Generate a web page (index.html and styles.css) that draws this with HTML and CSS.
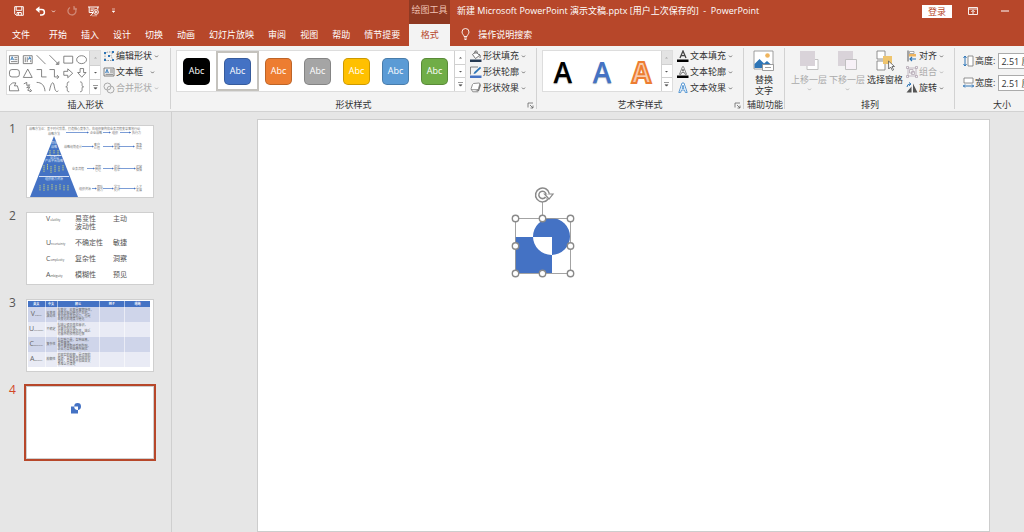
FILE: index.html
```html
<!DOCTYPE html>
<html lang="zh-CN">
<head>
<meta charset="utf-8">
<title>新建 Microsoft PowerPoint 演示文稿.pptx - PowerPoint</title>
<link rel="stylesheet" href="styles.css">
</head>
<body>
<svg class="defs" aria-hidden="true">
  <symbol id="chev" viewBox="0 0 5 5"><path d="M1 1.6 2.5 3.1 4 1.6" fill="none" stroke="currentColor" stroke-width=".8"/></symbol>
  <symbol id="launch" viewBox="0 0 7 7"><path d="M1 5.5V1h5M3 3l3 3M6 3.5V6H3.5" fill="none" stroke="#666" stroke-width=".8"/></symbol>
  <symbol id="up" viewBox="0 0 5 5"><path d="M1 3.5 2.5 2 4 3.5z" fill="currentColor"/></symbol>
  <symbol id="down" viewBox="0 0 5 5"><path d="M1 2 2.5 3.5 4 2z" fill="currentColor"/></symbol>
  <symbol id="more" viewBox="0 0 7 7"><path d="M1 1.5h5M2 3.7h3L3.5 5.2z" fill="#555" stroke="#555" stroke-width=".6"/></symbol>
</svg>

<header class="titlebar">
  <div class="quick">
    <button aria-label="保存"><svg width="10" height="10" viewBox="0 0 10 10"><path d="M.7.7h8.6v8.6H2.2L.7 7.800zM2.200.7v3.6h5.600V.7M3 9.300V6.500h4.300v2.800M4.600 7v2" fill="none" stroke="#fff" stroke-width="1"/></svg></button>
    <button class="undo" aria-label="撤消"><svg width="11" height="10" viewBox="0 0 11 10"><path d="M1.500 3.500h5.200a2.700 2.700 0 0 1 0 5.400H5" fill="none" stroke="#fff" stroke-width="1.500"/><path d="M4.500.2.6 3.500l3.900 3.400z" fill="#fff"/></svg><svg width="5" height="5"><use href="#chev"/></svg></button>
    <button class="faded" aria-label="恢复"><svg width="10" height="10" viewBox="0 0 10 10"><path d="M7.400 1.800A4 4 0 1 1 3 1.500M7 0v3h3" fill="none" stroke="#fff" stroke-width="1.300"/></svg></button>
    <button aria-label="从头开始"><svg width="12" height="11" viewBox="0 0 12 11"><path d="M0 1h11M1.200 1v5.500h4M9.800 1v2.500M2.500 3h4M2.500 4.700h2.500M2.500 10 5 6.800" fill="none" stroke="#fff" stroke-width="1"/><circle cx="8" cy="6" r="2.400" fill="none" stroke="#fff" stroke-width=".9"/><path d="m7.300 4.800 2 1.200-2 1.200zM4 9.800h5" fill="#fff" stroke="#fff" stroke-width=".5"/></svg></button>
    <button aria-label="自定义快速访问工具栏"><svg width="5" height="6" viewBox="0 0 5 6"><path d="M1 1h3M1.200 3h2.600L2.500 4.500z" fill="#fff" stroke="#fff" stroke-width=".6"/></svg></button>
  </div>
  <div class="context">绘图工具</div>
  <h1>新建 Microsoft PowerPoint 演示文稿.pptx [用户上次保存的]&nbsp; -&nbsp; PowerPoint</h1>
  <div class="window">
    <button class="login">登录</button>
    <button aria-label="功能区显示选项"><svg width="10" height="8" viewBox="0 0 10 8"><path d="M.5.5h9v7h-9zM.5 2h9M5 7V3.500M3.300 5 5 3.300 6.700 5" fill="none" stroke="#fff" stroke-width=".9"/></svg></button>
    <button aria-label="最小化"><svg width="8" height="2"><path d="M0 1h8" stroke="#fff"/></svg></button>
  </div>
</header>
<nav class="tabs">
  <button class="file">文件</button><button>开始</button><button>插入</button><button>设计</button><button>切换</button><button>动画</button><button>幻灯片放映</button><button>审阅</button><button>视图</button><button>帮助</button><button>情节提要</button><button class="active">格式</button>
  <button class="tell"><svg width="9" height="12" viewBox="0 0 9 12"><path d="M3 8.500C3 7 1 6 1 4a3.500 3.500 0 0 1 7 0c0 2-2 3-2 4.500zM3 10h3M3.500 11.500h2" fill="none" stroke="#fff" stroke-width=".9"/></svg>操作说明搜索</button>
</nav>

<section class="ribbon" aria-label="格式">
  <div class="group insert">
    <div class="body">
      <div class="gallery shapes">
        <svg width="82" height="44" viewBox="0 0 83 44" fill="none" stroke="#666" stroke-width=".8">
          <path d="M2.500 4.500h9v8h-9zM7.500 6.500h3M7.500 8.500h3M4 10.500h6.500"/><path d="m3.700 9 1.500-3.500L6.700 9M4.200 8h2" stroke="#2e75b6"/>
          <path d="M16.500 4.500h9v8h-9zM18.500 6v5M20.500 6v5M24 9v2"/><path d="m21.700 8.500 1.300-3 1.300 3M22 7.500h2" stroke="#2e75b6"/>
          <path d="m30 4 9 9M43 4l9 9M52.500 10.500v2.800h-2.800z"/>
          <path d="M57.500 5h9v7h-9z"/><ellipse cx="75.500" cy="8.500" rx="5" ry="4"/>
          <rect x="2.500" y="18.500" width="10" height="7.500" rx="2.500"/><path d="m21 18-4.500 8.500h9z"/>
          <path d="M30 18.500h5V26h5M43 18.500h5V26h4M50.500 24l2 2-2 2M57.500 20.300h4v-2.500l5 4.500-5 4.500v-2.500h-4zM74 17.500h3.500v4h2.500l-4.300 4.800-4.200-4.800H74z"/>
          <path d="M2.500 40V35l3-3h3.500l-1.500 3h3l1.500 5zM17 33l3-1.500v3l3-.5-3 3 3-1-2 3.500 3 1M23 38l2 2-2 1M30 31.500c5 0 8 3 8.500 9M43 40c2-10 4-10 5-4s3 5 4 4M63 31c-2 0-2 1-2 2.500S61 36 59.500 36C61 36 61 37 61 38.500s0 2.500 2 2.500M74 31c2 0 2 1 2 2.500s0 2.500 1.500 2.500C76 36 76 37 76 38.500S76 41 74 41"/>
        </svg>
        <div class="scroll"><button class="off" aria-label="上一行"><svg width="5" height="5"><use href="#up"/></svg></button><button aria-label="下一行"><svg width="5" height="5"><use href="#down"/></svg></button><button aria-label="其他形状"><svg width="7" height="7"><use href="#more"/></svg></button></div>
      </div>
      <div class="stack">
        <button><svg width="12" height="12" viewBox="0 0 12 12"><path d="M2 3v7.500h8L8 5.500 10 2H5z" fill="none" stroke="#777" stroke-width=".7" stroke-dasharray="1.500 1"/><path d="M1 2h2v2H1zM9 1h2v2H9zM1 9h2v2H1zM9 9h2v2H9zM5 5h2v2H5z" fill="#2e75b6"/></svg>编辑形状<svg class="chev"><use href="#chev"/></svg></button>
        <button><svg width="12" height="12" viewBox="0 0 12 12"><path d="M1 2h10v8H1zM7 4h3M7 6h3M2.500 8.300H10" fill="none" stroke="#666" stroke-width=".8"/><path d="m2.500 7 1.500-3.700L5.500 7M3 6h2" fill="none" stroke="#2e75b6" stroke-width=".8"/></svg>文本框<svg class="chev gap"><use href="#chev"/></svg></button>
        <button class="off" disabled><svg width="12" height="12" viewBox="0 0 12 12" fill="none" stroke="#aaa"><circle cx="4.500" cy="4.500" r="3.500"/><circle cx="7.500" cy="7.500" r="3.500"/></svg>合并形状<svg class="chev"><use href="#chev"/></svg></button>
      </div>
    </div>
    <div class="label">插入形状</div>
  </div>

  <div class="group styles">
    <div class="body">
      <div class="gallery swatches">
        <button><span class="black">Abc</span></button><button class="selected"><span class="blue">Abc</span></button><button><span class="orange">Abc</span></button><button><span class="gray">Abc</span></button><button><span class="gold">Abc</span></button><button><span class="sky">Abc</span></button><button><span class="green">Abc</span></button>
        <div class="scroll"><button aria-label="上一行"><svg width="5" height="5"><use href="#up"/></svg></button><button aria-label="下一行"><svg width="5" height="5"><use href="#down"/></svg></button><button aria-label="其他样式"><svg width="7" height="7"><use href="#more"/></svg></button></div>
      </div>
      <div class="stack">
        <button><svg width="12" height="12" viewBox="0 0 12 12"><path d="m2.500 4.500 3.500-3 3.500 4-4 3zM5 4V1.500Q6-.5 7 1.500V4M9 4q2 1 1 4" fill="#fff" stroke="#555" stroke-width=".8"/><path d="M0 9.500h11.500V12H0z" fill="#263a52"/></svg>形状填充<svg class="chev"><use href="#chev"/></svg></button>
        <button><svg width="12" height="12" viewBox="0 0 12 12"><path d="M8 1H.5v7.500" fill="none" stroke="#666" stroke-width=".8"/><path d="m3.500 8 .8-2L10 .8l1.200 1.200L5.500 7.500z" fill="#2e75b6"/><path d="M0 9.500h11.500V12H0z" fill="#4472c4"/></svg>形状轮廓<svg class="chev"><use href="#chev"/></svg></button>
        <button><svg width="12" height="12" viewBox="0 0 12 12"><path d="m3 10 6-1 2-6-1.500-2L8 8z" fill="#777"/><path d="m3.500 1.500 5.500-.5q1 0 .8 1L8.500 6.500q-.4 1.200-1.500 1.200H2Q.8 7.700 1.200 6.500L2.500 2.500zM1.300 7.500l1.500 2.300h5.500" fill="#fff" stroke="#777" stroke-width=".8"/></svg>形状效果<svg class="chev"><use href="#chev"/></svg></button>
      </div>
    </div>
    <div class="label">形状样式</div>
    <button class="launcher" aria-label="设置形状格式"><svg width="7" height="7"><use href="#launch"/></svg></button>
  </div>

  <div class="group wordart">
    <div class="body">
      <div class="gallery letters">
        <button class="ink">A</button><button class="azure">A</button><button class="outline">A</button>
        <div class="scroll"><button class="off" aria-label="上一行"><svg width="5" height="5"><use href="#up"/></svg></button><button aria-label="下一行"><svg width="5" height="5"><use href="#down"/></svg></button><button aria-label="其他艺术字"><svg width="7" height="7"><use href="#more"/></svg></button></div>
      </div>
      <div class="stack">
        <button><svg width="12" height="12" viewBox="0 0 12 12"><path d="M3 8 6 1l3 7M4 5.700h4" fill="none" stroke="#444" stroke-width="1.300"/><path d="M0 9.500h11.500V12H0z"/></svg>文本填充<svg class="chev"><use href="#chev"/></svg></button>
        <button><svg width="12" height="12" viewBox="0 0 12 12"><path d="M2.500 8.300 5.500.7h1l3 7.600H8L7.300 6.500H4.700L4 8.300zM5.200 5h1.600L6 3z" fill="#fff" stroke="#555" stroke-width=".7"/><path d="M0 9.500h11.500V12H0z"/></svg>文本轮廓<svg class="chev"><use href="#chev"/></svg></button>
        <button><svg width="12" height="12" viewBox="0 0 12 12"><path d="M1.800 10.500 5 1h2l3.200 9.500H8.300L7.600 8H4.400l-.7 2.500zM5 6.400h2L6 3.200z" fill="#fff" stroke="#4a90d0" stroke-width=".9"/></svg>文本效果<svg class="chev"><use href="#chev"/></svg></button>
      </div>
    </div>
    <div class="label">艺术字样式</div>
    <button class="launcher" aria-label="设置文本效果格式"><svg width="7" height="7"><use href="#launch"/></svg></button>
  </div>

  <div class="group access">
    <div class="body">
      <button class="large"><svg width="22" height="22" viewBox="0 0 22 22"><path d="M1 1h19v18H1z" fill="#fff" stroke="#888" stroke-width=".8"/><circle cx="14.500" cy="5.500" r="2.300" fill="#efb45d"/><path d="M1.500 18v-4l5-5 4.500 4.500 3-2.500 4 3.500V18z" fill="#2e75b6"/><path d="M9.500 14.500h11v6h-11zM12 17.500h6" fill="#fff" stroke="#888" stroke-width=".8"/></svg>替换<br>文字</button>
    </div>
    <div class="label">辅助功能</div>
  </div>

  <div class="group arrange">
    <div class="body">
      <button class="large off" disabled><svg width="22" height="22" viewBox="0 0 22 22"><path d="M9 9.500h11v10H9z" fill="#fff" stroke="#bbb" stroke-width=".9"/><path d="M2 1h15v15H2z" fill="#d9d3d9"/></svg>上移一层<svg class="chev"><use href="#chev"/></svg></button>
      <button class="large off" disabled><svg width="22" height="22" viewBox="0 0 22 22"><path d="M2 1h15v15H2z" fill="#d9d3d9"/><path d="M9.500 9.500h11v10h-11z" fill="#f7f1f7" stroke="#bbb" stroke-width=".9"/></svg>下移一层<svg class="chev"><use href="#chev"/></svg></button>
      <button class="large"><svg width="22" height="22" viewBox="0 0 22 22"><path d="M3 1h8v8H3zM3 11h8v9H3z" fill="#fff" stroke="#777" stroke-width=".8"/><path d="M9 6h9v8H9z" fill="#efc56e"/><path d="m14.500 11 .2 8 2-2 1.700 3.500 1.200-.7L18 16.500h2.500z" fill="#fff" stroke="#555" stroke-width=".8"/></svg>选择窗格</button>
      <div class="stack">
        <button><svg width="12" height="12" viewBox="0 0 12 12"><path d="M2 .5v11" stroke="#555"/><path d="M3.500 1.500H8v2H3.500z" fill="#fff" stroke="#777" stroke-width=".6"/><path d="M3 4h7v2.500H3z" fill="#efb45d"/><path d="M10 9H4M6 7 4 9l2 2" fill="none" stroke="#2e75b6" stroke-width="1.200"/></svg>对齐<svg class="chev"><use href="#chev"/></svg></button>
        <button class="off" disabled><svg width="12" height="12" viewBox="0 0 12 12" fill="none" stroke="#b5a8b5" stroke-width=".8"><path d="M2 2h8v8H2zM3.500 3.500H7V7H3.500zM5.500 5.500h3v3h-3zM.5.500h2v2h-2zM9.500.500h2v2h-2zM.5 9.500h2v2h-2zM9.500 9.500h2v2h-2z"/></svg>组合<svg class="chev"><use href="#chev"/></svg></button>
        <button><svg width="12" height="12" viewBox="0 0 12 12"><path d="M.5 10.500h5v-6zM7 10.500V1.500l4.500 9z" fill="#555"/><path d="M1 5q0-3 3.500-3M3 .5 5 2 3 3.800" fill="none" stroke="#2e75b6"/></svg>旋转<svg class="chev"><use href="#chev"/></svg></button>
      </div>
    </div>
    <div class="label">排列</div>
  </div>

  <div class="group size">
    <div class="body fields">
      <label><svg width="11" height="12" viewBox="0 0 11 12"><path d="M5 1h5v10H5z" fill="#fff" stroke="#777" stroke-width=".8"/><path d="M2 1v10M.5 3 2 1l1.500 2M.5 9 2 11l1.500-2" fill="none" stroke="#2e75b6"/></svg>高度:<input value="2.51 厘米"></label>
      <label><svg width="11" height="12" viewBox="0 0 11 12"><path d="M1 1h9v5H1z" fill="#fff" stroke="#777" stroke-width=".8"/><path d="M0 9h11M2 7.500.5 9 2 10.500M9 7.500l1.500 1.500L9 10.500" fill="none" stroke="#2e75b6"/></svg>宽度:<input value="2.51 厘米"></label>
    </div>
    <div class="label">大小</div>
  </div>
</section>

<main class="workspace">
  <aside class="slides" aria-label="幻灯片">
    <div class="item"><span class="num">1</span>
      <div class="thumb">
        <svg viewBox="0 0 126 71" class="pyramid">
          <text x="2" y="4">战略方法论：基于时代背景，打造核心竞争力，在组织架构和业务流程变革落地行动</text>
          <path d="M27 10 3 71h48z" fill="#4472c4"/>
          <path d="M19.500 29.500h15M12 50.500h30" stroke="#fff" stroke-width=".8"/>
          <text x="21" y="9">战略方法</text>
          <g class="light"><text x="24" y="18">目标</text><text x="24" y="22">战略</text><text x="23" y="33">业务层</text><text x="18" y="36">产品平台战略</text><text x="18" y="54">组织能力资源</text></g>
          <path d="M23 24v5M27 24v4M31 24v5M17 39v7M20.500 38v6M24 40v7M28 39v7M32 40v6M36 39v6M13 59v6M17 58v7M21 59v6M25 58v6M29 59v6M33 58v6M37 59v6M41 59v6" stroke="#b7c883" stroke-width="1" stroke-dasharray="1.500 .5"/>
          <path d="M39 6.500h21M76 6.500h7M93 6.500h11M55 20.500h10M76 20.500h9M92 20.500h14M60 42.500h7M76 42.500h9M92 42.500h15M65 62.500h4M76 62.500h9M92 62.500h15" stroke="#4472c4" stroke-width=".7"/>
          <path d="m60 5.500 2 1-2 1zM82 5.500l2 1-2 1zM102 5.500l2 1-2 1zM65 19.500l2 1-2 1zM85 19.500l2 1-2 1zM106 19.500l2 1-2 1zM66 41.500l2 1-2 1zM85 41.500l2 1-2 1zM107 41.500l2 1-2 1zM68 61.500l2 1-2 1zM85 61.500l2 1-2 1zM107 61.500l2 1-2 1z" fill="#4472c4"/>
          <text x="63" y="8">企业战略</text><text x="85" y="8">组织</text><text x="105" y="8">执行力</text>
          <text x="37" y="22">战略规划设计</text><text x="67" y="20">客户</text><text x="67" y="23">价值</text><text x="87" y="20">创新</text><text x="87" y="23">发展</text><text x="109" y="20">竞争</text><text x="109" y="23">优势</text>
          <text x="45" y="44">业务流程</text><text x="68" y="42">流程</text><text x="68" y="45">管理</text><text x="87" y="42">优化</text><text x="87" y="45">效率</text><text x="109" y="42">运营</text><text x="109" y="45">保障</text>
          <text x="52" y="64">组织资源</text><text x="70" y="62">团队</text><text x="70" y="65">能力</text><text x="87" y="62">学习</text><text x="87" y="65">提升</text><text x="109" y="62">人才</text><text x="109" y="65">发展</text>
        </svg>
      </div></div>
    <div class="item"><span class="num">2</span>
      <div class="thumb words">
        <span>V<small>olatility</small></span><span>易变性<br>波动性</span><span>主动</span>
        <span>U<small>ncertainty</small></span><span>不确定性</span><span>敏捷</span>
        <span>C<small>omplexity</small></span><span>复杂性</span><span>洞察</span>
        <span>A<small>mbiguity</small></span><span>模糊性</span><span>预见</span>
      </div></div>
    <div class="item"><span class="num">3</span>
      <div class="thumb">
        <table>
          <colgroup><col class="c1"><col class="c2"><col class="c3"><col class="c4"><col class="c4"></colgroup>
          <thead><tr><th>英文</th><th>中文</th><th>释义</th><th>例子</th><th>措施</th></tr></thead>
          <tbody>
            <tr><td>V<small>olatility</small></td><td>易变性<br>波动性</td><td>指变化、易变是事物特性，<br>由变化驱动催化产生的。<br>变化的本质和动力，也是<br>由变化的速度与催化</td><td></td><td></td></tr>
            <tr><td>U<small>ncertainty</small></td><td>不确定</td><td>指缺少预见性和意识，<br>对意外的理解。<br>对变化缺乏预见性，缺乏<br>对意外的预期和理解</td><td></td><td></td></tr>
            <tr><td>C<small>omplexity</small></td><td>复杂性</td><td>指各种力量，各种因素，<br>各种事情。<br>每件事情都会受到影响，<br>企业为各种因素所困扰</td><td></td><td></td></tr>
            <tr><td>A<small>mbiguity</small></td><td>模糊性</td><td>对现实的模糊，是误解的<br>根源，各种条件和因果的<br>混杂，各种条件和因果关<br>系难以分清楚</td><td></td><td></td></tr>
          </tbody>
        </table>
      </div></div>
    <div class="item current"><span class="num">4</span>
      <div class="thumb"><svg viewBox="0 0 126 71"><path fill-rule="evenodd" fill="#4472c4" d="M44 19.500h7V26.500H44zM54 19.500a3.400 3.400 0 1 1-6.800 0 3.400 3.400 0 0 1 6.800 0z"/></svg></div></div>
  </aside>
  <div class="stage">
    <div class="slide">
      <svg class="object" width="66" height="92" viewBox="0 0 66 92" role="img" aria-label="组合形状">
        <path fill="#4472c4" fill-rule="evenodd" d="M5 51h37v36H5zM60 50.500a18.500 18.500 0 1 1-37 0 18.500 18.500 0 0 1 37 0z"/>
        <path d="M5.500 32.500h55v55h-55zM32.500 15v17" fill="none" stroke="#999" stroke-width=".9"/>
        <g fill="#fff" stroke="#8a8a8a" stroke-width="1.400"><circle cx="5.500" cy="32.500" r="3.200"/><circle cx="32.500" cy="32.500" r="3.200"/><circle cx="60.500" cy="32.500" r="3.200"/><circle cx="5.500" cy="60" r="3.200"/><circle cx="60.500" cy="60" r="3.200"/><circle cx="5.500" cy="87.500" r="3.200"/><circle cx="32.500" cy="87.500" r="3.200"/><circle cx="60.500" cy="87.500" r="3.200"/></g>
        <path d="M36.800 12A5.300 5.300 0 1 1 37.700 8" fill="none" stroke="#8a8a8a" stroke-width="4.800"/>
        <path d="M34.500 8h8.500l-4 5z" fill="#fff" stroke="#8a8a8a" stroke-width="1.200"/>
        <path d="M36.500 12.500A5.300 5.300 0 1 1 37.800 8.500" fill="none" stroke="#fff" stroke-width="1.800"/>
      </svg>
    </div>
  </div>
</main>
</body>
</html>
```
FILE: styles.css
```css
* { box-sizing: border-box; }
body {
  margin: 0;
  height: 100vh;
  display: flex;
  flex-direction: column;
  overflow: hidden;
  background: #e6e6e6;
  color: #333;
  font: 9px/12px "Open Sans", "Noto Sans CJK SC", sans-serif;
}
button, input { font: inherit; color: inherit; }
button { border: 0; padding: 0; background: none; white-space: nowrap; }
svg { display: block; flex: none; }
.defs { position: absolute; width: 0; height: 0; }

.titlebar, .tabs { display: flex; background: #b7472a; color: #fff; flex: none; }
.titlebar { height: 24px; align-items: center; padding-bottom: 2px; }
.quick { width: 409px; padding-left: 14px; display: flex; align-items: center; gap: 11px; }
.undo { display: flex; align-items: center; gap: 5px; }
.faded { opacity: .35; }
.context {
  width: 41px;
  height: 24px;
  margin-bottom: -2px;
  background: #8f3922;
  color: #eec0b2;
  line-height: 20px;
  text-align: center;
}
h1 { margin: 0 0 0 7px; font: inherit; white-space: nowrap; }
.window { margin-left: auto; padding-right: 15px; display: flex; align-items: center; gap: 16px; }
.window button:last-child { margin-left: 7px; }
.window .login { width: 30px; height: 13px; line-height: 13px; background: #fff; color: #b7472a; }

.tabs { height: 22px; padding-left: 5px; }
.tabs button { padding: 0 7px 2px; line-height: 19px; }
.tabs .file { padding-right: 12px; }
.tabs .active { width: 41px; margin-left: 2px; background: #f3f3f3; color: #b7472a; }
.tabs .tell { display: flex; align-items: center; gap: 8px; padding-left: 11px; }

.ribbon {
  display: flex;
  flex: none;
  height: 66px;
  padding-top: 2px;
  background: #f3f3f3;
  border-bottom: 1px solid #d2d2d2;
  overflow: hidden;
}
.group { position: relative; flex: none; display: flex; flex-direction: column; padding: 0 6px; }
.group::after { content: ""; position: absolute; right: 0; top: 0; bottom: 2px; border-right: 1px solid #d2d2d2; }
.insert { width: 171px; }
.styles { width: 366px; padding-left: 5px; }
.wordart { width: 207px; padding-left: 5px; }
.access { width: 41px; padding: 0 3px; }
.arrange { width: 170px; padding: 0 5px; }
.size { width: 94px; padding: 0 8px; }
.body { display: flex; height: 50px; align-items: flex-start; }
.label { text-align: center; line-height: 13px; white-space: nowrap; }
.launcher { position: absolute; right: 3px; bottom: 2px; }
.gallery { display: flex; flex: none; margin-top: 2px; background: #fff; border: 1px solid #ddd; height: 42px; }
.shapes { height: 45px; }
.swatches { width: 290px; }
.letters { width: 131px; }
.scroll { width: 11px; flex: none; display: flex; flex-direction: column; border-left: 1px solid #d0d0d0; color: #555; }
.scroll button { flex: 1; display: flex; align-items: center; justify-content: center; }
.scroll button + button { border-top: 1px solid #d0d0d0; }
.scroll .off { background: #e3e3e3; color: #aaa; }
.stack { padding-left: 4px; display: flex; flex-direction: column; }
.shapes + .stack { padding-left: 2px; }
.stack button { height: 16px; display: flex; align-items: center; gap: 1px; }
.chev { width: 5px; height: 5px; margin-left: 1px; color: #555; }
.chev.gap { margin-left: 6px; }
.off, .off .chev { color: #aaa; }

.swatches > button { flex: 1; display: flex; align-items: center; justify-content: center; }
.swatches .selected { border: 2px solid #c4c2bd; }
.swatches span { width: 27px; height: 27px; flex: none; border-radius: 5px; border: 1px solid #0003; color: #fff; line-height: 24px; }
.black { background: #000; }
.blue { background: #4472c4; }
.orange { background: #ed7d31; }
.gray { background: #a5a5a5; }
.gold { background: #ffc000; }
.sky { background: #5b9bd5; }
.green { background: #70ad47; }

.letters > button { flex: 1; font: 600 28px/42px "Open Sans", sans-serif; }
.ink { color: #000; text-shadow: 0 1px 1px #999; }
.azure { color: #4472c4; text-shadow: 0 1px 1px #9ab; }
.letters .outline { color: #f8cbad; font-weight: 700; -webkit-text-stroke: 2px #ed7d31; }

.large { display: flex; flex-direction: column; align-items: center; padding-top: 2px; line-height: 11px; width: 38px; flex: none; }
.access .large { width: 34px; }
.large > svg:first-child { margin-bottom: 2px; }
.large .chev { margin: 2px 0 0; }
.large + .stack { padding-left: 2px; }
.fields { flex-direction: column; gap: 6px; padding-top: 5px; }
.fields label { display: flex; align-items: center; gap: 1px; white-space: nowrap; }
.fields input { width: 50px; height: 16px; flex: none; border: 1px solid #ababab; background: #fff; padding: 0 2px; margin-left: 2px; }

.workspace { flex: 1; min-height: 0; display: flex; }
.slides { width: 172px; flex: none; border-right: 1px solid #cfcfcf; padding: 13px 0 0 9px; display: flex; flex-direction: column; gap: 14px; }
.item { display: flex; }
.num { width: 17px; font-size: 12px; line-height: 8px; color: #555; }
.thumb { width: 128px; height: 73px; background: #fff; border: 1px solid #cfcfcf; overflow: hidden; color: #555; }
.current .num { color: #d24726; }
.current .thumb { outline: 2px solid #b7472a; }
.pyramid text { font-size: 3px; fill: #777; }
.pyramid .light text { fill: #dde6f5; }
.words { display: grid; grid-template-columns: 29px 38px 1fr; grid-template-rows: 24px 16px 16px 16px; padding: 2px 0 0 19px; font-size: 7px; line-height: 8px; white-space: nowrap; }
small { font-size: 3px; }
table { width: 122px; margin: 1px; border-collapse: collapse; table-layout: fixed; font-size: 3px; line-height: 3px; text-align: center; color: #666; }
table small { font-size: 2px; }
th, td { padding: 0; white-space: nowrap; }
th { height: 6px; background: #4472c4; color: #fff; }
td { height: 15px; background: #e9ebf5; }
td + td, th + th { border-left: 1px solid #fff8; }
tr:nth-child(odd) td { background: #cfd5ea; }
td:first-child { font-size: 7px; line-height: 8px; }
td:nth-child(3) { text-align: left; }
.c1 { width: 17px; }
.c2 { width: 12px; }
.c3 { width: 42px; }

.stage { flex: 1; min-width: 0; padding: 7px 34px 0 85px; }
.slide { position: relative; aspect-ratio: 733 / 413; background: #fff; border: 1px solid #cdcdcd; }
.object { position: absolute; left: 252px; top: 66px; }
```
